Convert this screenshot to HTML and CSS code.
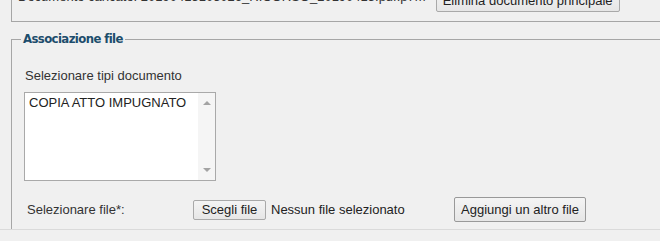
FILE: index.html
```html
<!DOCTYPE html>
<html lang="it">
<head>
<meta charset="utf-8">
<title>Associazione file</title>
<link rel="stylesheet" href="styles.css">
</head>
<body>
<div class="viewport">
  <div class="content">
    <fieldset class="fs fs-top">
      <div class="doc-row">
        <span class="doc-name">Documento caricato: 20190415105026_RICORSO_20190415.pdf.p7m</span>
        <button type="button" class="btn btn-del">Elimina documento principale</button>
      </div>
    </fieldset>

    <fieldset class="fs fs-assoc">
      <legend class="legend">Associazione file</legend>
      <div class="field-label">Selezionare tipi documento</div>
      <div class="listbox" role="listbox">
        <div class="options">
          <div class="option" role="option">COPIA ATTO IMPUGNATO</div>
        </div>
        <div class="scrollbar">
          <span class="arrow arrow-up"></span>
          <span class="arrow arrow-down"></span>
        </div>
      </div>
      <div class="file-row">
        <label class="file-label">Selezionare file*:</label>
        <div class="file-input">
          <button type="button" class="btn btn-choose">Scegli file</button>
          <span class="file-status">Nessun file selezionato</span>
        </div>
        <button type="button" class="btn btn-add">Aggiungi un altro file</button>
      </div>
    </fieldset>
  </div>
</div>
</body>
</html>
```

FILE: styles.css
```css
* { box-sizing: border-box; }

html, body {
  margin: 0;
  padding: 0;
  background: #f0f0f0;
  overflow: hidden;
}

body {
  font-family: "Liberation Sans", Arial, sans-serif;
  font-size: 13px;
  color: #333;
}

.viewport {
  height: 230px;
  overflow: hidden;
  border-bottom: 1px solid #dadada;
}

.content {
  margin-top: -29px;
  margin-right: -20px;
}

.fs {
  border: 1px solid #a6a6a6;
  margin: 0 0 0 11px;
  min-width: 0;
}

.fs-top {
  padding: 16px 10px 9px 6px;
}

.doc-row {
  display: flex;
  align-items: center;
  gap: 10px;
  white-space: nowrap;
}

.doc-name {
  color: #333;
  margin-bottom: 8px;
}

.btn {
  font-family: "Liberation Sans", Arial, sans-serif;
  font-size: 13px;
  color: #222;
  background: linear-gradient(#f4f4f4, #e6e6e6);
  border: 1px solid #a9a9a9;
  border-radius: 2px;
  padding: 0 6px;
  margin: 0;
  white-space: nowrap;
}

.btn-del {
  height: 24px;
  width: 184px;
}

.fs-assoc {
  margin-top: 9px;
  padding: 0 0 40px 12px;
}

.legend {
  font-family: "Liberation Sans Narrow", "DejaVu Sans Condensed", "Liberation Sans", sans-serif;
  font-weight: bold;
  font-size: 13px;
  line-height: 16px;
  letter-spacing: -0.6px;
  color: #1d4d6c;
  padding: 0 2px;
  margin-left: -3px;
}

.field-label {
  margin-top: 21px;
  line-height: 15px;
  padding-left: 1px;
}

.listbox {
  display: flex;
  width: 192px;
  height: 89px;
  margin-top: 9px;
  background: #fff;
  border: 1px solid #a9a9a9;
}

.options {
  flex: 1;
  padding: 2px 4px;
}

.option {
  line-height: 15px;
  color: #222;
}

.scrollbar {
  width: 17px;
  background: #f5f5f5;
  display: flex;
  flex-direction: column;
  justify-content: space-between;
  align-items: center;
  padding: 8px 0 8px;
}

.arrow {
  width: 0;
  height: 0;
  border-left: 4px solid transparent;
  border-right: 4px solid transparent;
}

.arrow-up { border-bottom: 4px solid #a3a3a3; }
.arrow-down { border-top: 4px solid #a3a3a3; }

.file-row {
  display: grid;
  grid-template-columns: 169px 261px auto;
  align-items: center;
  margin-top: 16px;
  height: 25px;
}

.file-label {
  padding-left: 3px;
}

.file-input {
  display: flex;
  align-items: center;
}

.btn-choose {
  height: 20px;
  width: 73px;
  padding: 0;
}

.file-status {
  margin-left: 5px;
  color: #222;
}

.btn-add {
  justify-self: start;
  height: 25px;
  width: 132px;
  padding: 0;
  border-color: #999;
}
```
